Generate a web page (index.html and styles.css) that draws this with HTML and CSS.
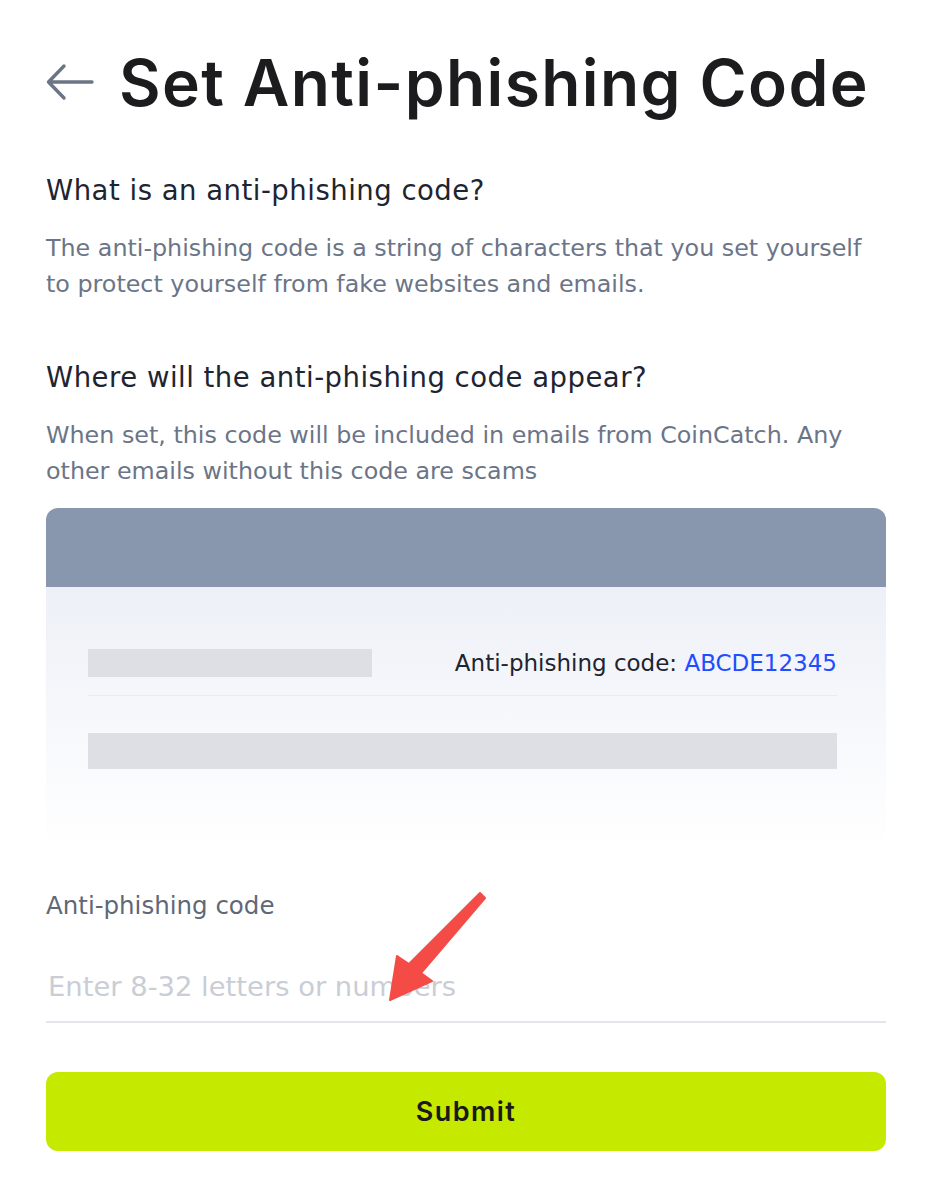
FILE: index.html
```html
<!DOCTYPE html>
<html lang="en">
<head>
    <meta charset="UTF-8">
    <meta name="viewport" content="width=device-width, initial-scale=1.0">
    <title>Set Anti-phishing Code</title>
    <link rel="stylesheet" href="styles.css">
</head>
<body>
    <div class="page">
        <div class="title-row">
            <a class="back" href="#">
                <svg width="50" height="40" viewBox="0 0 50 40" fill="none" stroke="#6b7585" stroke-width="3.4" stroke-linecap="round" stroke-linejoin="round">
                    <path d="M47 20H4M19 4L3.5 20L19 36"/>
                </svg>
            </a>
            <h1>Set Anti-phishing Code</h1>
        </div>

        <h2>What is an anti-phishing code?</h2>
        <p class="desc">The anti-phishing code is a string of characters that you set yourself to protect yourself from fake websites and emails.</p>

        <h2 class="second">Where will the anti-phishing code appear?</h2>
        <p class="desc">When set, this code will be included in emails from CoinCatch. Any other emails without this code are scams</p>

        <!-- sample email preview -->
        <div class="mail">
            <div class="mail-head"></div>
            <div class="mail-body">
                <div class="mail-row">
                    <span class="skeleton short"></span>
                    <span class="code-line">Anti-phishing code: <b>ABCDE12345</b></span>
                </div>
                <div class="skeleton long"></div>
            </div>
        </div>

        <div class="field">
            <label for="code">Anti-phishing code</label>
            <input id="code" type="text" placeholder="Enter 8-32 letters or numbers">
        </div>

        <button class="submit">Submit</button>

        <svg class="pointer" width="130" height="130" viewBox="0 0 130 130">
            <polygon points="110,13 115,18 51,93 62,101 20,120 27,76 39,84" fill="#f44b47" stroke="#f44b47" stroke-width="2" stroke-linejoin="round"/>
        </svg>
    </div>
</body>
</html>
```

FILE: styles.css
```css
body {
    margin: 0;
    background: #fff;
    font-family: "DejaVu Sans", Inter, sans-serif;
    color: #1e2330;
}

.page {
    position: relative;
    width: 840px;
    padding: 40px 46px 40px;
}

.title-row {
    display: flex;
    align-items: center;
    gap: 24px;
    height: 84px;
}

.back {
    display: flex;
    margin-left: -1px;
}

h1 {
    margin: 0;
    font-family: Inter, sans-serif;
    font-size: 64px;
    font-weight: 600;
    color: #1c1c1e;
    letter-spacing: 1.4px;
}

h2 {
    margin: 48px 0 0;
    font-size: 27.5px;
    line-height: 36px;
    font-weight: 400;
    letter-spacing: 0.5px;
    color: #1e2430;
}

h2.second {
    margin-top: 57px;
}

.desc {
    margin: 22px 0 0;
    font-size: 23.8px;
    line-height: 36px;
    color: #6b7587;
}

.mail {
    margin-top: 19px;
    border-radius: 12px 12px 0 0;
    overflow: hidden;
}

.mail-head {
    height: 79px;
    background: #8997ae;
}

.mail-body {
    height: 263px;
    padding: 0 49px 0 42px;
    background: linear-gradient(#edf0f7, #f5f7fb 45%, #fff 100%);
}

.mail-row {
    display: flex;
    justify-content: space-between;
    align-items: center;
    padding-top: 61px;
    padding-bottom: 17px;
    border-bottom: 1px solid #e9ecf2;
}

.skeleton {
    display: block;
    background: #dddfe4;
}

.skeleton.short {
    width: 284px;
    height: 28px;
}

.skeleton.long {
    height: 36px;
    margin-top: 37px;
}

.code-line {
    font-size: 23px;
    line-height: 30px;
    color: #1e2430;
}

.code-line b {
    font-weight: 400;
    color: #1f4dff;
}

.field {
    margin-top: 38px;
}

.field label {
    display: block;
    font-size: 24.5px;
    line-height: 36px;
    color: #5f6877;
}

.field input {
    display: block;
    box-sizing: border-box;
    width: 100%;
    height: 72px;
    margin-top: 27px;
    padding: 0 0 0 2px;
    border: none;
    border-bottom: 2px solid #e3e5ea;
    font-family: inherit;
    font-size: 27.4px;
    color: #1e2430;
    outline: none;
}

.field input::placeholder {
    color: #c9cdd6;
}

.submit {
    display: block;
    width: 100%;
    height: 79px;
    margin-top: 49px;
    border: none;
    border-radius: 12px;
    background: #c6e900;
    font-family: Inter, sans-serif;
    font-size: 27px;
    font-weight: 600;
    letter-spacing: 1.4px;
    color: #1a1a1a;
    cursor: pointer;
}

.pointer {
    position: absolute;
    left: 370px;
    top: 880px;
}
```
